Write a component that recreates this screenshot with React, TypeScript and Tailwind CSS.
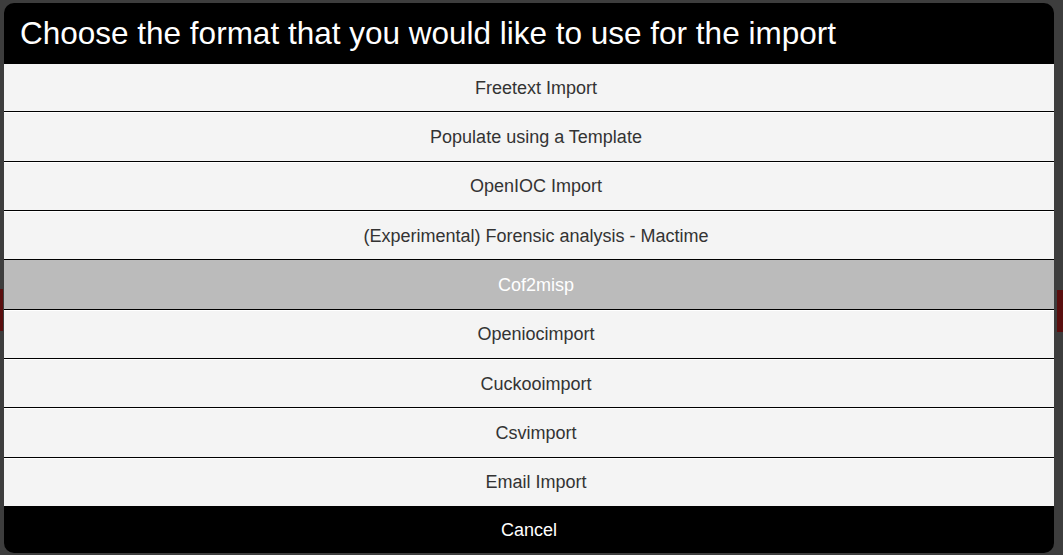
// Import format chooser popover

const OPTIONS = [
  "Freetext Import",
  "Populate using a Template",
  "OpenIOC Import",
  "(Experimental) Forensic analysis - Mactime",
  "Cof2misp",
  "Openiocimport",
  "Cuckooimport",
  "Csvimport",
  "Email Import",
]

const SELECTED = "Cof2misp"

export default function App() {
  return (
    <div
      className="relative h-[555px] w-full overflow-hidden bg-[#3d3d3d] pt-[3px] pl-[4px]"
      style={{ fontFamily: '"Liberation Sans", Arial, sans-serif' }}
    >
      {/* page behind the overlay peeking out at the edges */}
      <div className="absolute left-0 top-[289px] h-[42px] w-[3px] bg-[#5a0e0e]" />
      <div className="absolute right-0 top-[290px] h-[42px] w-[6px] bg-[#5a0e0e]" />

      {/* Dialog */}
      <div className="relative flex h-[550px] w-[1050px] flex-col overflow-hidden rounded-[10px] bg-black">
        <div className="flex h-[61px] shrink-0 items-center pl-[16px] pt-[1px] text-[31.5px] text-white">
          Choose the format that you would like to use for the import
        </div>

        <div className="flex flex-1 flex-col">
          {OPTIONS.map((label, i) => {
            const selected = label === SELECTED
            const last = i === OPTIONS.length - 1
            return (
              <div
                key={label}
                className={
                  "flex flex-1 items-center justify-center pl-[14px] pt-[1px] text-[18px] " +
                  (selected
                    ? "bg-[#bbbbbb] text-white border-t-[#bbbbbb] "
                    : "bg-[#f4f4f4] text-[#333333] border-t-white ") +
                  (last ? "" : "border-b border-b-black ") +
                  (i > 0 ? "border-t" : "")
                }
              >
                {label}
              </div>
            )
          })}
        </div>

        <div className="flex h-[47px] shrink-0 items-center justify-center pt-[2px] text-[18px] text-white">
          Cancel
        </div>
      </div>
    </div>
  )
}
